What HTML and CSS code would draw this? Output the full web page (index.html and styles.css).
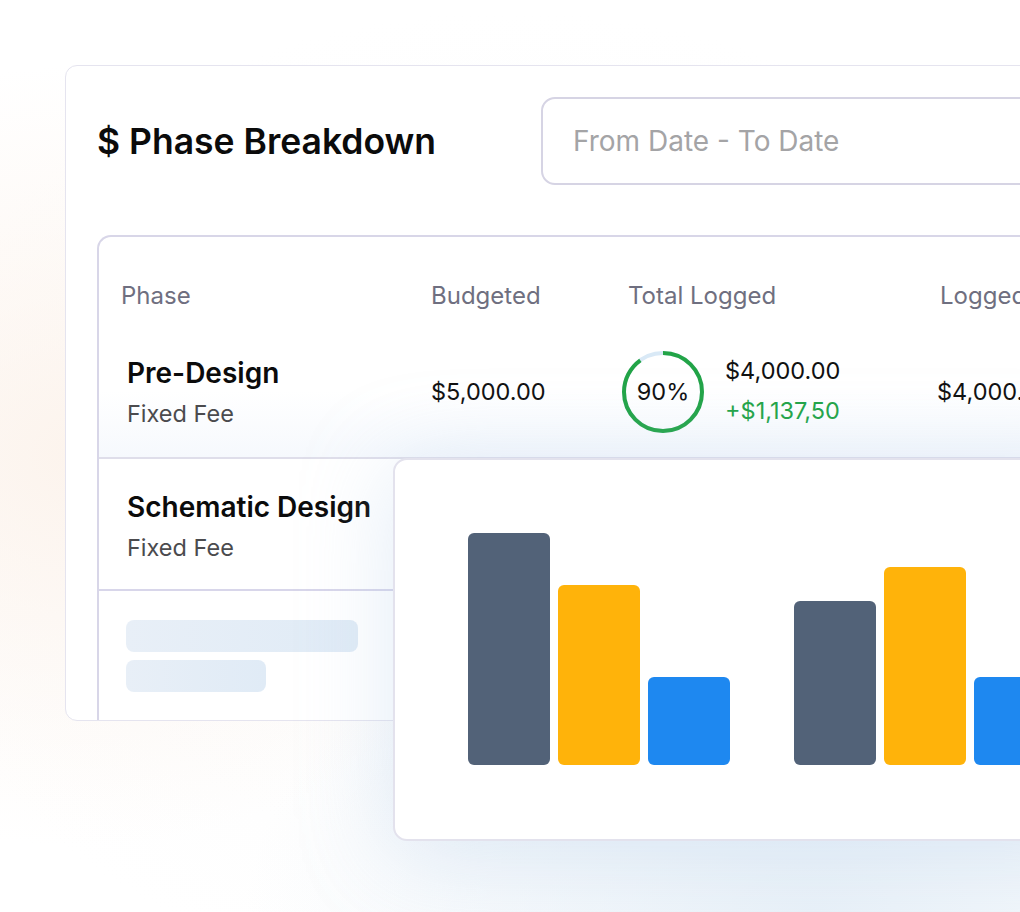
FILE: index.html
```html
<!DOCTYPE html>
<html lang="en">
<head>
<meta charset="utf-8">
<title>Phase Breakdown</title>
<link rel="stylesheet" href="styles.css">
</head>
<body>
<div class="stage">
  <section class="card">
    <header class="card-head">
      <h1 class="title">$ Phase Breakdown</h1>
      <div class="date-input">From Date - To Date</div>
    </header>
    <div class="table">
      <div class="grid thead">
        <div class="th">Phase</div>
        <div class="th">Budgeted</div>
        <div class="th">Total Logged</div>
        <div class="th">Logged</div>
      </div>
      <div class="grid row">
        <div class="phase">
          <div class="phase-name">Pre-Design</div>
          <div class="phase-type">Fixed Fee</div>
        </div>
        <div class="val">$5,000.00</div>
        <div class="logged">
          <svg class="ring" width="84" height="84" viewBox="0 0 84 84">
            <circle cx="42" cy="42" r="39" fill="none" stroke="#d9e9f6" stroke-width="4"/>
            <circle cx="42" cy="42" r="39" fill="none" stroke="#22a447" stroke-width="4" stroke-dasharray="220.5 300" transform="rotate(-90 42 42)"/>
            <text x="42" y="50" text-anchor="middle" class="ring-text">90%</text>
          </svg>
          <div class="logged-vals">
            <div class="val">$4,000.00</div>
            <div class="val green">+$1,137,50</div>
          </div>
        </div>
        <div class="val last">$4,000.00</div>
      </div>
      <div class="side">
        <div class="side-row">
          <div class="phase-name">Schematic Design</div>
          <div class="phase-type">Fixed Fee</div>
        </div>
        <div class="skeleton">
          <div class="sk sk-long"></div>
          <div class="sk sk-short"></div>
        </div>
      </div>
    </div>
  </section>
  <section class="chart">
    <div class="bars">
      <div class="group">
        <div class="bar slate" style="height:232px"></div>
        <div class="bar amber" style="height:180px"></div>
        <div class="bar blue" style="height:88px"></div>
      </div>
      <div class="group">
        <div class="bar slate" style="height:164px"></div>
        <div class="bar amber" style="height:198px"></div>
        <div class="bar blue" style="height:88px"></div>
      </div>
    </div>
  </section>
</div>
</body>
</html>
```
FILE: styles.css
```css
* { box-sizing: border-box; }
html, body { margin: 0; padding: 0; }
body {
  width: 1020px;
  height: 912px;
  overflow: hidden;
  font-family: Inter, "Noto Sans", "Liberation Sans", sans-serif;
  color: #111;
  background:
    radial-gradient(ellipse 620px 520px at 8% 50%, rgba(252,242,234,0.85) 0%, rgba(252,242,234,0) 75%),
    radial-gradient(ellipse 760px 460px at 80% 100%, #e9f1f8 0%, rgba(233,241,248,0) 75%),
    radial-gradient(ellipse 900px 700px at 50% 55%, #fbfbfb 0%, rgba(255,255,255,0) 70%),
    #ffffff;
}
.stage {
  position: relative;
  padding: 65px 0 0 65px;
  width: 1020px;
  height: 912px;
}
.card {
  width: 1100px;
  height: 656px;
  background: #fff;
  border: 1px solid #e5e4ef;
  border-radius: 12px;
  overflow: hidden;
  padding: 31px 0 0 31px;
}
.card-head {
  display: flex;
  align-items: center;
  height: 88px;
  margin-bottom: 50px;
}
.title {
  flex: 0 0 444px;
  margin: 0;
  font-size: 35.5px;
  font-weight: 600;
  color: #0b0b0b;
}
.date-input {
  flex: 0 0 640px;
  height: 88px;
  border: 2px solid #d6d4e4;
  border-radius: 14px;
  display: flex;
  align-items: center;
  padding-left: 30px;
  font-size: 28px;
  color: #a4a4a6;
}
.table {
  border: 2px solid #d8d6e8;
  border-right: none;
  border-radius: 14px 0 0 0;
  height: 600px;
  background: #fff;
}
.grid {
  display: grid;
  grid-template-columns: 310px 197px 312px 1fr;
  padding-left: 22px;
}
.thead { padding-top: 45px; }
.th {
  font-size: 24px;
  line-height: 28px;
  color: #6f6f80;
  white-space: nowrap;
}
.row {
  padding-top: 40px;
  padding-bottom: 23px;
  align-items: center;
  border-bottom: 2px solid #dfdeea;
  background: linear-gradient(180deg, #ffffff 55%, #f6f9fd 100%);
}
.phase { padding-left: 6px; }
.phase-name {
  font-size: 28px;
  line-height: 34px;
  font-weight: 600;
  color: #0b0b0b;
  white-space: nowrap;
}
.phase-type {
  margin-top: 10px;
  font-size: 23.5px;
  line-height: 28px;
  color: #4b4b4e;
}
.val {
  font-size: 23.5px;
  line-height: 28px;
  color: #111;
  white-space: nowrap;
}
.green { color: #22a447; margin-top: 12px; }
.logged {
  display: flex;
  align-items: center;
  margin-left: -7px;
}
.logged-vals { margin-left: 20px; margin-top: -2px; }
.ring { display: block; }
.ring-text { font-family: Inter, "Noto Sans", sans-serif; font-size: 23.5px; fill: #111; }
.last { margin-left: -3px; }
.side { width: 294px; }
.side-row {
  padding: 31px 0 27px 28px;
  border-bottom: 2px solid #d8d6ea;
}
.skeleton {
  padding: 29px 0 0 27px;
  display: flex;
  flex-direction: column;
  gap: 8px;
}
.sk {
  height: 32px;
  border-radius: 8px;
  background: linear-gradient(90deg, #e8eff7, #e0ebf6);
}
.sk-long { width: 232px; }
.sk-short { width: 140px; }
.chart {
  position: absolute;
  left: 393px;
  top: 458px;
  width: 720px;
  height: 383px;
  background: #fff;
  border: 2px solid #e3e2ed;
  border-radius: 14px;
  box-shadow: 0 10px 90px rgba(170, 198, 232, 0.34);
  padding: 0 0 74px 73px;
  display: flex;
  align-items: flex-end;
}
.bars {
  display: flex;
  align-items: flex-end;
  gap: 64px;
}
.group {
  display: flex;
  align-items: flex-end;
  gap: 8px;
}
.bar {
  width: 82px;
  border-radius: 6px;
}
.slate { background: #526278; }
.amber { background: #ffb30a; }
.blue { background: #1e88f0; }
```
